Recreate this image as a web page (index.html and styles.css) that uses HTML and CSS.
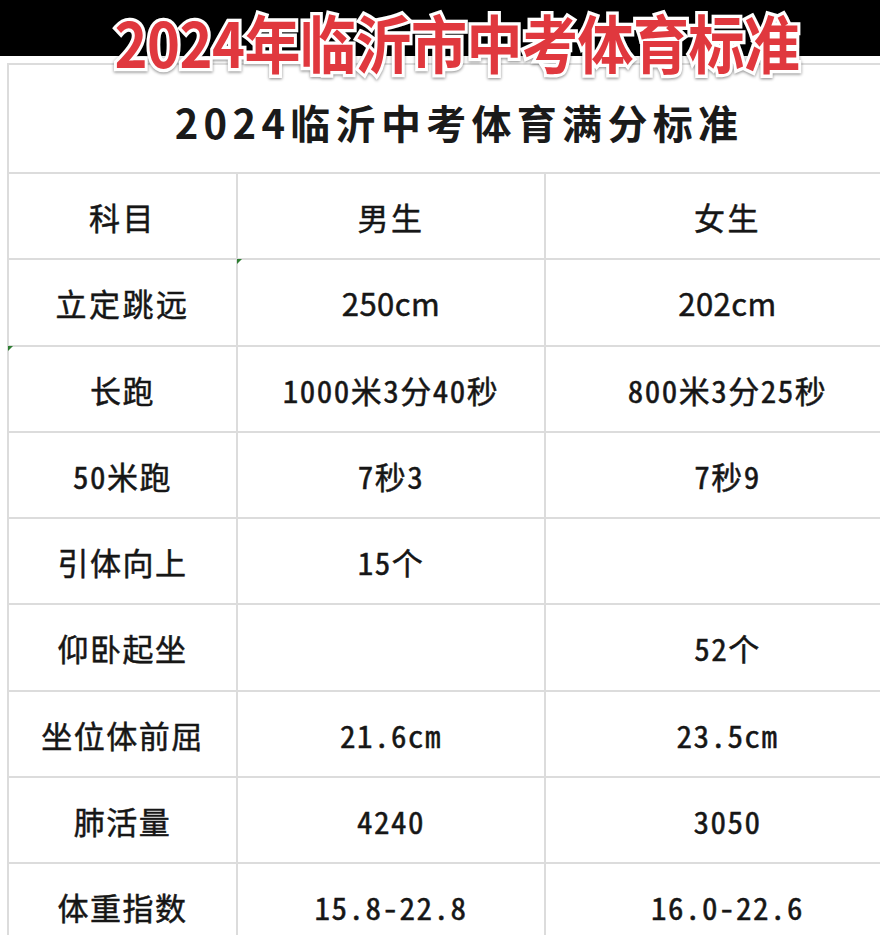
FILE: index.html
```html
<!DOCTYPE html>
<html lang="zh-CN">
<head>
<meta charset="utf-8">
<title>2024年临沂市中考体育标准</title>
<link rel="stylesheet" href="styles.css">
</head>
<body>
<div class="band"></div>
<h1 class="banner">2024年临沂市中考体育标准</h1>
<table class="sheet">
  <colgroup>
    <col class="c1"><col class="c2"><col class="c3">
  </colgroup>
  <tr class="title-row"><td colspan="3" class="title">2024临沂中考体育满分标准</td></tr>
  <tr><td>科目</td><td>男生</td><td>女生</td></tr>
  <tr class="prop"><td class="mark-l">立定跳远</td><td class="mark num">250cm</td><td class="num">202cm</td></tr>
  <tr class="hw"><td>长跑</td><td>1000米3分40秒</td><td>800米3分25秒</td></tr>
  <tr class="hw"><td>50米跑</td><td>7秒3</td><td>7秒9</td></tr>
  <tr class="hw"><td>引体向上</td><td>15个</td><td></td></tr>
  <tr class="hw"><td>仰卧起坐</td><td></td><td>52个</td></tr>
  <tr class="hw"><td>坐位体前屈</td><td>21.6cm</td><td>23.5cm</td></tr>
  <tr class="hw"><td>肺活量</td><td>4240</td><td>3050</td></tr>
  <tr class="hw last"><td>体重指数</td><td>15.8-22.8</td><td>16.0-22.6</td></tr>
</table>
</body>
</html>
```

FILE: styles.css
```css
html, body {
  margin: 0;
  padding: 0;
  background: #ffffff;
  overflow: hidden;
  width: 880px;
  height: 935px;
}

body {
  position: relative;
  font-family: "Noto Sans CJK SC", "Noto Sans", sans-serif;
  color: #1c1c1c;
}

.band {
  height: 56px;
  background: #000000;
}

.banner {
  position: absolute;
  top: 5px;
  left: 0;
  width: 880px;
  box-sizing: border-box;
  padding-left: 34px;
  margin: 0;
  text-align: center;
  font-family: "Noto Sans CJK SC", sans-serif;
  font-weight: 700;
  font-size: 56px;
  line-height: 72px;
  letter-spacing: -0.5px;
  color: #e0383e;
  -webkit-text-stroke: 6px #ffffff;
  paint-order: stroke fill;
  transform: scaleY(1.12);
  filter: drop-shadow(0 1px 1.5px rgba(0, 0, 0, 0.45));
  z-index: 2;
}

.sheet {
  margin: 7px 0 0 7px;
  width: 902px;
  table-layout: fixed;
  border-collapse: collapse;
}

.c1 { width: 229px; }
.c2 { width: 308px; }
.c3 { width: 365px; }

.sheet td {
  border: 2px solid #dcdcdc;
  height: 83.25px;
  padding: 1px 0 0 0;
  text-align: center;
  vertical-align: middle;
  font-size: 31px;
  font-weight: 400;
  letter-spacing: 2.5px;
  position: relative;
  color: #161616;
  -webkit-text-stroke: 0.5px #161616;
}

.title-row td.title {
  height: 101px;
  padding-top: 6px;
  font-size: 40px;
  font-weight: 700;
  letter-spacing: 5.3px;
  color: #1a1a1a;
  -webkit-text-stroke: 0;
}

.prop td.num {
  letter-spacing: 0.5px;
}

.hw td {
  font-feature-settings: "hwid" 1;
  letter-spacing: 1.5px;
}

.last td {
  border-bottom: none;
}

.mark::before,
.mark-l::after {
  content: "";
  position: absolute;
  width: 0;
  height: 0;
  border-top: 5px solid #2e7d32;
  border-right: 5px solid transparent;
}

.mark::before {
  top: -1px;
  left: -1px;
}

.mark-l::after {
  bottom: -6px;
  left: -1px;
}
```
